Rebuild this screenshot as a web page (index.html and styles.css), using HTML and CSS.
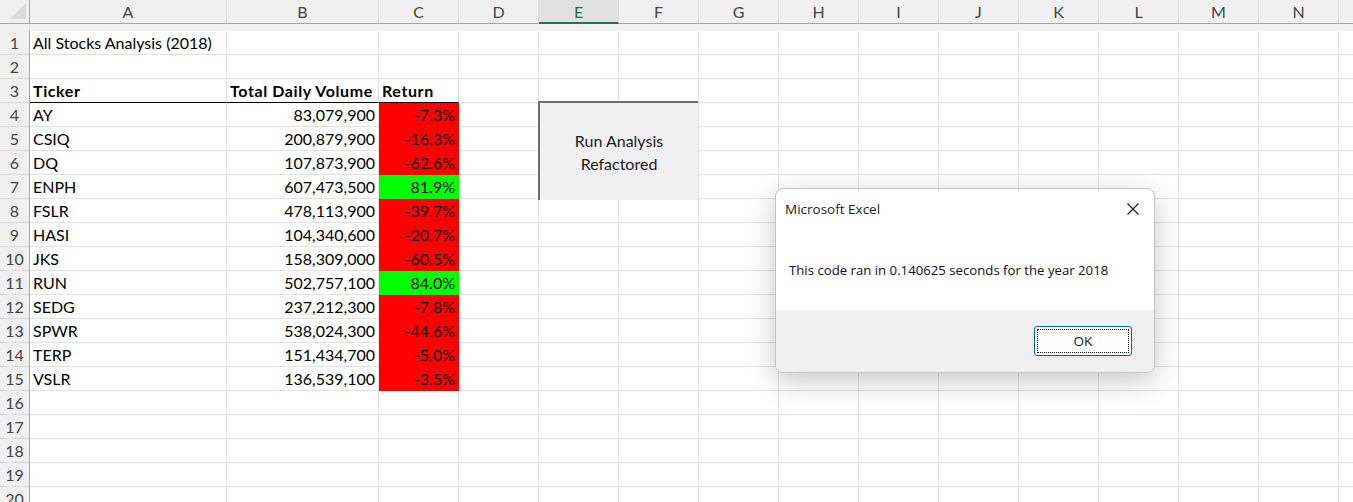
FILE: index.html
```html
<!DOCTYPE html>
<html>
<head>
<meta charset="utf-8">
<link rel="stylesheet" href="styles.css">
</head>
<body>
<div class="sheet">
  <div class="row head">
    <div class="corner"><span class="tri"></span></div>
    <div class="ch">A</div><div class="ch">B</div><div class="ch">C</div><div class="ch">D</div>
    <div class="ch sel">E</div><div class="ch">F</div><div class="ch">G</div><div class="ch">H</div>
    <div class="ch">I</div><div class="ch">J</div><div class="ch">K</div><div class="ch">L</div>
    <div class="ch">M</div><div class="ch">N</div><div class="ch"></div><div class="ch"></div>
  </div>
  <div class="row"><div class="rh">1</div><div class="t">All Stocks Analysis (2018)</div><div></div><div></div><div></div><div></div><div></div><div></div><div></div><div></div><div></div><div></div><div></div><div></div><div></div><div></div></div>
  <div class="row"><div class="rh">2</div><div></div><div></div><div></div><div></div><div></div><div></div><div></div><div></div><div></div><div></div><div></div><div></div><div></div><div></div><div></div></div>
  <div class="row"><div class="rh">3</div><div class="t b ul">Ticker</div><div class="t b ul">Total Daily Volume</div><div class="t b ul">Return</div><div></div><div></div><div></div><div></div><div></div><div></div><div></div><div></div><div></div><div></div><div></div><div></div></div>
  <div class="row"><div class="rh">4</div><div class="t">AY</div><div class="n">83,079,900</div><div class="n red">-7.3%</div><div></div><div></div><div></div><div></div><div></div><div></div><div></div><div></div><div></div><div></div><div></div><div></div></div>
  <div class="row"><div class="rh">5</div><div class="t">CSIQ</div><div class="n">200,879,900</div><div class="n red">-16.3%</div><div></div><div></div><div></div><div></div><div></div><div></div><div></div><div></div><div></div><div></div><div></div><div></div></div>
  <div class="row"><div class="rh">6</div><div class="t">DQ</div><div class="n">107,873,900</div><div class="n red">-62.6%</div><div></div><div></div><div></div><div></div><div></div><div></div><div></div><div></div><div></div><div></div><div></div><div></div></div>
  <div class="row"><div class="rh">7</div><div class="t">ENPH</div><div class="n">607,473,500</div><div class="n green">81.9%</div><div></div><div></div><div></div><div></div><div></div><div></div><div></div><div></div><div></div><div></div><div></div><div></div></div>
  <div class="row"><div class="rh">8</div><div class="t">FSLR</div><div class="n">478,113,900</div><div class="n red">-39.7%</div><div></div><div></div><div></div><div></div><div></div><div></div><div></div><div></div><div></div><div></div><div></div><div></div></div>
  <div class="row"><div class="rh">9</div><div class="t">HASI</div><div class="n">104,340,600</div><div class="n red">-20.7%</div><div></div><div></div><div></div><div></div><div></div><div></div><div></div><div></div><div></div><div></div><div></div><div></div></div>
  <div class="row"><div class="rh">10</div><div class="t">JKS</div><div class="n">158,309,000</div><div class="n red">-60.5%</div><div></div><div></div><div></div><div></div><div></div><div></div><div></div><div></div><div></div><div></div><div></div><div></div></div>
  <div class="row"><div class="rh">11</div><div class="t">RUN</div><div class="n">502,757,100</div><div class="n green">84.0%</div><div></div><div></div><div></div><div></div><div></div><div></div><div></div><div></div><div></div><div></div><div></div><div></div></div>
  <div class="row"><div class="rh">12</div><div class="t">SEDG</div><div class="n">237,212,300</div><div class="n red">-7.8%</div><div></div><div></div><div></div><div></div><div></div><div></div><div></div><div></div><div></div><div></div><div></div><div></div></div>
  <div class="row"><div class="rh">13</div><div class="t">SPWR</div><div class="n">538,024,300</div><div class="n red">-44.6%</div><div></div><div></div><div></div><div></div><div></div><div></div><div></div><div></div><div></div><div></div><div></div><div></div></div>
  <div class="row"><div class="rh">14</div><div class="t">TERP</div><div class="n">151,434,700</div><div class="n red">-5.0%</div><div></div><div></div><div></div><div></div><div></div><div></div><div></div><div></div><div></div><div></div><div></div><div></div></div>
  <div class="row"><div class="rh">15</div><div class="t">VSLR</div><div class="n">136,539,100</div><div class="n red">-3.5%</div><div></div><div></div><div></div><div></div><div></div><div></div><div></div><div></div><div></div><div></div><div></div><div></div></div>
  <div class="row"><div class="rh">16</div><div></div><div></div><div></div><div></div><div></div><div></div><div></div><div></div><div></div><div></div><div></div><div></div><div></div><div></div><div></div></div>
  <div class="row"><div class="rh">17</div><div></div><div></div><div></div><div></div><div></div><div></div><div></div><div></div><div></div><div></div><div></div><div></div><div></div><div></div><div></div></div>
  <div class="row"><div class="rh">18</div><div></div><div></div><div></div><div></div><div></div><div></div><div></div><div></div><div></div><div></div><div></div><div></div><div></div><div></div><div></div></div>
  <div class="row"><div class="rh">19</div><div></div><div></div><div></div><div></div><div></div><div></div><div></div><div></div><div></div><div></div><div></div><div></div><div></div><div></div><div></div></div>
  <div class="row"><div class="rh">20</div><div></div><div></div><div></div><div></div><div></div><div></div><div></div><div></div><div></div><div></div><div></div><div></div><div></div><div></div><div></div></div>

  <div class="macro-btn">Run Analysis<br>Refactored</div>

  <div class="dialog">
    <div class="dlg-title">
      <span>Microsoft Excel</span>
      <svg class="close" width="14" height="14" viewBox="0 0 14 14"><path d="M1.5 1.5 L12.5 12.5 M12.5 1.5 L1.5 12.5" stroke="#1b1b1b" stroke-width="1.1" fill="none"/></svg>
    </div>
    <div class="dlg-msg">This code ran in 0.140625 seconds for the year 2018</div>
    <div class="dlg-foot">
      <div class="ok"><span>OK</span></div>
    </div>
  </div>
</div>
</body>
</html>
```

FILE: styles.css
```css
html, body {
  margin: 0;
  padding: 0;
  background: #ffffff;
  overflow: hidden;
}
.sheet {
  position: relative;
  width: 1353px;
  height: 502px;
  overflow: hidden;
  font-family: Lato, "Open Sans", sans-serif;
  font-size: 16px;
  color: #000;
}
.row {
  display: grid;
  grid-template-columns: 30px 197px 152px repeat(13, 80px);
  height: 24px;
}
.row > div {
  box-sizing: border-box;
  border-right: 1px solid #e1e1e1;
  border-bottom: 1px solid #e1e1e1;
  white-space: nowrap;
  overflow: visible;
  line-height: 23px;
}
.row.head {
  height: 31px;
  background: #f0f0f0;
}
.row.head > div {
  border-bottom: 1px solid #a6a6a6;
}
.corner {
  position: relative;
  border-right: 1px solid #a6a6a6 !important;
}
.tri {
  position: absolute;
  right: 3px;
  bottom: 4px;
  width: 0;
  height: 0;
  border-left: 16px solid transparent;
  border-bottom: 16px solid #dadada;
}
.ch {
  align-self: end;
  height: 24px;
  text-align: center;
  color: #444;
  border-right: 1px solid #dcdcdc !important;
  line-height: 23px;
  font-size: 16px;
}
.row.head > .ch.sel {
  background: #e1e1e1;
  color: #1e6e45;
  border-bottom: 2px solid #217346;
}
.rh {
  background: #f0f0f0;
  color: #444;
  text-align: center;
  border-right: 1px solid #a6a6a6 !important;
  border-bottom: 1px solid #dadada !important;
}
.t {
  padding-left: 3px;
}
.n {
  text-align: right;
  padding-right: 3px;
}
.b {
  font-weight: bold;
  letter-spacing: 0.6px;
}
.row > .ul {
  border-bottom: 1px solid #000;
}
.row > .red {
  background: #ff0000;
  border-color: #ff0000;
}
.row > .green {
  background: #00ff00;
  border-color: #00ff00;
}
.macro-btn {
  position: absolute;
  left: 538px;
  top: 101px;
  width: 160px;
  height: 99px;
  box-sizing: border-box;
  background: #f0f0f0;
  border-top: 2px solid #6d6d6d;
  border-left: 2px solid #6d6d6d;
  display: flex;
  align-items: center;
  justify-content: center;
  text-align: center;
  line-height: 23px;
  font-size: 16px;
  color: #1a1a1a;
}
.dialog {
  position: absolute;
  left: 775px;
  top: 188px;
  width: 380px;
  height: 185px;
  box-sizing: border-box;
  border: 1px solid #c4c4c4;
  border-radius: 8px;
  background: #fff;
  box-shadow: 0 8px 28px rgba(0, 0, 0, 0.22);
  overflow: hidden;
  display: flex;
  flex-direction: column;
  font-family: "Open Sans", "Noto Sans", sans-serif;
  color: #1a1a1a;
}
.dlg-title {
  display: flex;
  align-items: center;
  justify-content: space-between;
  height: 40px;
  padding: 0 14px 0 9px;
  font-size: 13.5px;
  color: #1a1a1a;
}
.dlg-msg {
  flex: 1;
  display: flex;
  align-items: center;
  padding: 0 13px;
  font-size: 13.2px;
  color: #1a0a1a;
}
.dlg-foot {
  height: 62px;
  background: #f0f0f0;
  display: flex;
  align-items: center;
  justify-content: flex-end;
  padding-right: 22px;
}
.ok {
  width: 98px;
  height: 30px;
  box-sizing: border-box;
  border: 1px solid #0067c0;
  border-radius: 3px;
  background: #fdfdfd;
  padding: 2px;
  display: flex;
}
.ok span {
  flex: 1;
  border: 1px dotted #111;
  display: flex;
  align-items: center;
  justify-content: center;
  font-size: 13.5px;
  color: #1a1a1a;
}
```
